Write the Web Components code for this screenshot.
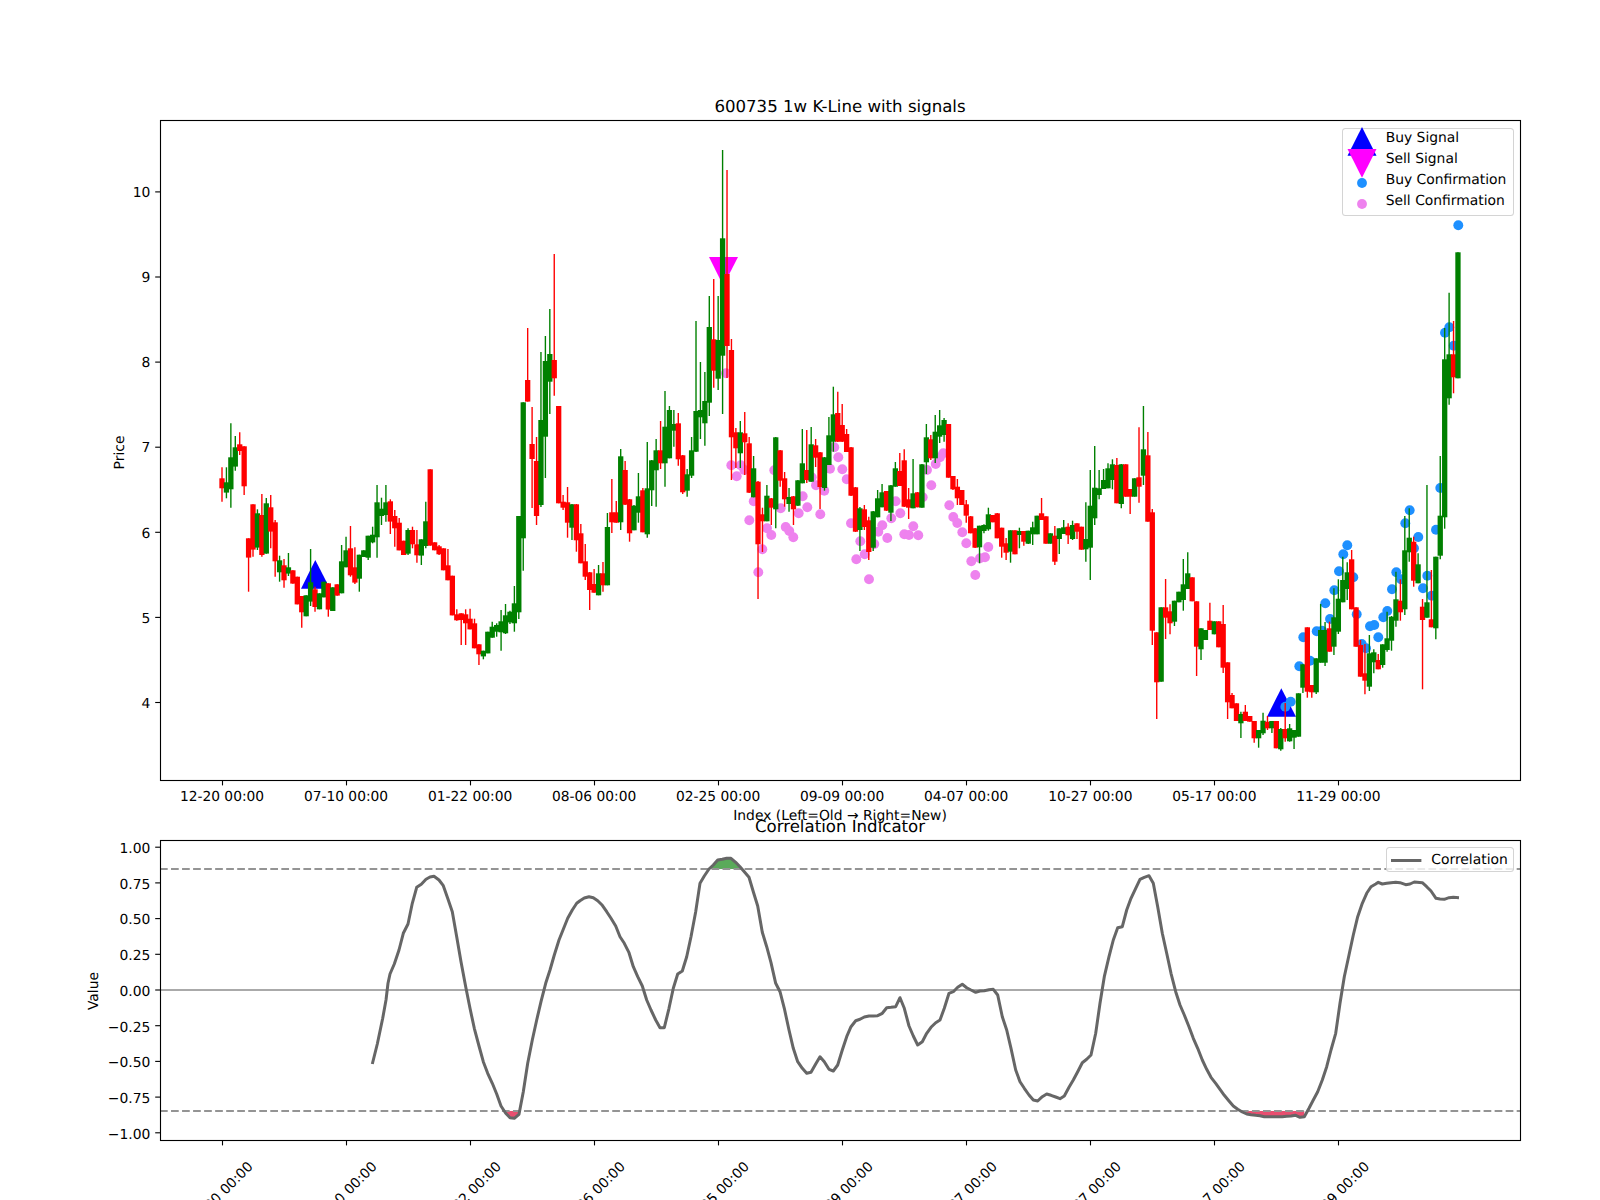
<!DOCTYPE html>
<html lang="en"><head><meta charset="utf-8"><title>600735 1w K-Line with signals</title>
<style>html,body{margin:0;padding:0;background:#fff;overflow:hidden}</style></head>
<body>
<chart-figure>
  <kline-panel>
    <chart-legend style="left:1182.3px;top:7.7px;width:172px;height:88.6px;--text-gap:8.6px;--shift:-0.4px;--marker-adj:0.4px">
      <legend-item marker="up">Buy Signal</legend-item>
      <legend-item marker="down">Sell Signal</legend-item>
      <legend-item marker="dot" color="#1e90ff">Buy Confirmation</legend-item>
      <legend-item marker="dot" color="#ee82ee">Sell Confirmation</legend-item>
    </chart-legend>
  </kline-panel>
  <corr-panel>
    <chart-legend style="left:1226.3px;top:7.3px;width:127.4px;height:25px;--shift:0.6px;--marker-adj:-0.6px">
      <legend-item marker="line">Correlation</legend-item>
    </chart-legend>
  </corr-panel>
</chart-figure>
<script>
const FONT = '"DejaVu Sans","Liberation Sans",sans-serif';
const xTickIdx = [0,28,56,84,112,140,168,196,224,252];
const xTickLabels = ['12-20 00:00','07-10 00:00','01-22 00:00','08-06 00:00','02-25 00:00','09-09 00:00','04-07 00:00','10-27 00:00','05-17 00:00','11-29 00:00'];
const idxX = n => 222 + 4.43 * n;
const z = (ox, oy) => ([x, y]) => [ox + x / 3, oy + y / 3];

/* candles: colour, wick top, body top, body bottom, wick bottom */
const Z1 = `r 262 295 325 365|g 262 307 338 355|g 130 232 328 383|g 168 202 260 272|r 157 193 213 225|r 199 199 319 345|r 475 475 533 635|r 373 373 509 530|g 388 400 503 510|r 342 405 525 530|g 354 370 521 521|r 345 382 455 505|r 420 427 544 590|g 527 541 577 605|r 537 556 601 623|g 519 562 581 588|r 571 571 611 611|r 590 590 673 673|r 648 648 697 743|g 646 646 709 709|g 507 607 665 678|r 620 628 681 695|g 640 640 688 688|g 605 605 652 652|r 610 610 689 710|g 622 622 693 693|r 613 613 647 647|g 495 544 640 640|g 470 511 562 562|r 438 505 586 590|r 502 562 608 612|g 524 524 596 635|g 511 511 531 531|g 467 467 533 540|g 440 464 487 490|g 315 367 472 533|g 353 386 408 435|g 315 367 405 425|r 358 364 425 462|r 390 408 445 500|r 414 428 511 511|r 482 482 525 525|g 445 450 521 525|r 440 450 493 505|r 450 493 526 548|g 478 478 527 555|g 365 424 498 505|r 268 268 497 497|r 487 487 511 511|r 495 499 523 525|r 505 505 571 571|r 507 556 601 601|r 587 587 706 706|r 688 703 721 722|r 700 700 720 795|r 688 703 730 795|r 686 716 748 748|r 716 730 805 805|r 793 793 823 855|g 812 812 829 838|g 755 755 820 820|g 725 740 773 773|g 730 735 755 770|g 690 724 757 812|g 672 706 760 762|g 692 695 727 732|g 618 670 730 755|g 408 408 697 717|g 67 67 475 572`;
const REAL = `r 328 380 401.6 401.6|r 407 444 459 508|r 437 461 516 525|g 352 420 505 507|g 336 361 436.7 478|g 309 354 381.7 414|r 254 360 378.3 395.7|r 406 406 503.3 503.3|r 495 501.7 507.7 510|r 487 502.3 522.7 537.7|g 504 504.3 527.7 540|r 504 504.3 540.3 551.7|r 524 533.3 563.3 563.3|r 544 561.3 576.7 580|r 572 572.3 590 610|r 569 584 592.7 592.7|g 565 573.3 595.3 595.3|r 562 573.3 585.3 591.7|g 513 527 585.3 585.3|r 479 512.3 522.3 533|r 501 512.3 522.7 522.7|g 449 456.3 522.3 530|r 461 470 504.7 505|r 499 499.3 533.3 541.7|g 505 505.7 530.3 530.3|g 473 496.3 512.7 522.7|r 488 490.3 532.3 532.3|g 442 488.3 534.3 537.7|g 460 460.3 490.3 506|g 439 450.3 470.3 506.7|r 421 450.3 463.3 469|g 391 426.7 463.3 486.7|g 406 410 458.3 458.3|g 410 424 430.7 446.7|r 413 423.3 459.3 465.7|r 455 455.3 492.3 494|g 469 474.3 490.7 496.7|g 437 450.3 475.7 478|g 321 411 451.7 452|g 362 410 417.3 439|g 372 401 423.3 445.7|g 296 327 402.7 416|r 279 339.3 370.7 387.7|g 296 340 378.7 390|g 150 238.3 355.7 414|r 170 274 346 378|r 339 350 437.3 480|r 428 432.3 448.3 468|g 421 432.3 453.3 468|r 412 433.3 442.3 475|r 437 443.3 492.7 493|g 456 468.3 497.3 497.3|r 481 481.7 544.3 599|r 507.7 514.3 521.3 552|g 485 495.7 521.3 521.3|r 498 498.3 507.7 525|g 437 437.3 509.3 528.3|r 450 450.3 480.7 486.7|r 472 478.3 499.3 506.7|g 488 497 504 511.7|r 496 496.3 509.3 525|g 480 480.3 505.7 506|g 429 463.3 483.3 483.3|r 430 470 480 483|g 427 444.3 481.7 481.7|r 439 445.3 457.7 467|r 452 452.3 487 509|g 457 457.3 488 490.7|g 417 435.3 465 465|g 386.7 414.3 441.7 451.7|r 391.7 413 441.7 442|r 404 425 441.7 442|r 429 434 452 452|r 447 447.3 495.7 496|r 487 487.3 531.7 532|g 507 508.3 530 551|r 505 509.3 527 530|r 516.7 520.3 552 560|g 511 511.3 547.7 551|g 490 498.3 517.3 517.3|g 484 492.3 507.3 507.3|r 491 491 510.7 511|g 485 485.3 512.7 521|g 462 468.3 486.7 486.7|r 453 471 486 486|r 449.3 460.3 506.7 507|r 488 499.3 507.7 519|g 459 493.3 508.3 508.3|r 492 492.3 507.3 507.3|g 464 464.3 507.7 507.7|g 424 437.3 462.3 474|r 435 439.3 458.3 460|g 415 431.7 458.3 463|g 410 425.3 436.7 443|g 418 420 435 441.7|r 424 424 477.7 477.7|r 476 476 489.3 490|r 479 486.7 498.3 505|r 490 490 505 505|r 500 504.3 515.7 522.7|r 516 516.3 533.3 533.3|r 528 528.3 547.7 548|g 525.7 525.7 547.3 563.3|g 524.3 525 531 533.3|g 507.7 514.3 529.3 530.7|r 515 515 522.3 522.3|r 513 513.3 538.3 538.3|r 527.7 527.7 546.7 557.7|r 538 543.3 552.7 560|g 530.3 530.3 551.7 562.7|r 530.3 530.3 554.3 554.3|g 527.7 531 535 548.3|r 531 531 541.7 545.7|g 530.7 530.7 543.7 544|g 521.7 527.3 534.3 545|g 515.7 515.7 534.3 534.3|r 498 513.3 520 520|r 516.3 516.3 543.7 543.7|g 533.3 533.3 543.7 543.7|r 526 535.7 561.7 565|g 528.3 528.3 539 554|g 520 527.3 534 534|r 523.3 526.7 535.3 544|g 520.7 525 539 540|r 523.3 523.3 531.7 539|r 526.7 526.7 549.7 549.7|g 502.3 539 549.3 561.7|g 470 505.7 547.7 580|g 446 487.7 518.3 525|g 470 488.3 495 499.3|g 469 480 489 489|g 463.3 468.3 488.3 488.3|g 459.3 464.3 480 489.3|r 458 465 503.3 503.3|g 464 464.3 504 508.3|r 464.3 464.3 496.7 496.7|r 489 489 496.7 514|g 478.3 478.3 496.7 496.7|r 427.3 477.3 486.7 502.7|g 406 449.3 475.7 485|r 432 455.3 521.7 521.7|r 509 512.3 630.7 645|r 632.3 632.3 682.3 719|g 607.3 607.3 681.7 681.7|r 579 607.3 617.7 639|r 604.3 611.3 623.3 634.3|g 600.7 600.7 621.7 626|g 591.7 591.7 602.3 602.3|g 559 584.3 600 610.7|g 552.3 573.3 589 589|r 577.3 577.3 601.3 601.3|r 601.3 601.3 646.7 676|g 628.3 628.3 649.3 660|g 630 630 640 640|r 602.7 620.7 630 630|g 621.3 621.3 634.3 634.3|r 621.3 621.3 647.3 647.3|r 605 624 667.7 673|r 662.3 662.3 702.3 719|r 693 695 708.3 708.3|r 703.3 703.3 721 721|g 711.7 714 723.3 738|r 705 711.7 721 721|r 716 716 721.7 721.7|r 721 721 738.3 742.7|g 730 730 738.3 747.7|g 712.7 720.7 733.3 735|r 716 721.7 728.3 730|g 721 721 728.3 733|r 721 721 748.3 748.3|g 728 729 749.3 750.7|r 703 729 738.3 741.7|g 724 728.3 741.3 741.7|g 730 730 737.7 749|g 693.3 693.3 736.7 736.7|g 664.3 664.3 687.7 693|r 627.3 627.3 691.7 697.7|r 685 685 692.3 697.7|g 658.3 658.3 692.3 694|g 604 630 662.7 662.7|g 622 630 662.7 666|r 621.7 628.3 651.7 651.7|g 588.3 617.3 646.7 655|g 579.3 598.7 631.7 634|g 556.7 580 602.3 602.3|g 562.3 572.3 589 600|r 550 559.3 609.3 609.3|r 607.3 607.3 646.7 646.7|r 640 645 676.7 676.7|r 644 673.3 680.7 694.3|g 635 653.3 686.7 691|g 649.3 652.3 662.3 673.3|r 654 660 669.3 669.3|g 644.3 644.3 665 667.7|g 611.7 638.3 650 651.7|g 616 616.7 640.7 650.7|g 571.7 599.3 620.7 626.7|r 579.3 600.7 612.3 620.7|g 516 550.3 609.3 615|g 508.3 537.7 552.3 561.7|r 536.7 541.7 580.7 586.7|g 553.3 564.3 583.3 583.3|r 599 606.7 620 689.3|g 485 602.3 617.7 617.7|r 570 619.3 627.3 627.3|g 556.7 556.7 628.3 639.3|g 456 515.7 555.7 559.3|g 328 359.3 517.3 528.7|g 292.7 354.3 398.3 404.7|r 321 354.3 377.3 393.3|g 252.3 252.3 378.3 378.3`;
const parseC = (s, f) => s.split('|').map(r => { const p = r.split(' '); return [p[0], ...p.slice(1).map(f)]; });
const CANDLES = [...parseC(Z1, v => 380 + v / 3), ...parseC(REAL, Number)];

const PINK = [
 ...[[574,196],[590,229],[602,196],[613,210],[628,361],[641,304],[655,517],[667,448],[681,385],[694,405],[703,211],[722,325],[737,381],[748,393],[760,412],[776,340],[788,289],[802,322],[815,232],[828,256],[841,343],[853,272],[870,206],[883,142],[895,172],[907,208],[920,238],[933,370],[949,478],[961,424],[974,463],[987,538],[1003,432],[1015,395],[1027,376],[1042,414],[1054,355],[1067,304],[1081,340],[1093,403],[1107,405],[1120,379],[1135,406],[1148,292],[1161,210],[1174,256],[1187,192]].map(z(540,400)),
 ...[[30,172],[40,160],[58,316],[70,351],[82,369],[97,397],[109,430],[124,484],[136,525],[150,475],[165,472],[175,441]].map(z(930,400)),
 [726,373.3]
];
const BLUE = [
 ...[[136,1010],[152,995],[178,889],[190,802],[210,872],[230,784],[246,782],[256,700],[270,747],[283,661],[297,604],[310,553],[322,526],[340,622],[350,733],[365,822],[378,835],[390,769],[403,765],[415,802],[430,742],[442,723],[456,658],[469,607],[483,628],[496,460],[509,421],[522,535],[535,501],[549,655],[562,617],[575,677],[588,479],[601,354]].map(z(1240,370)),
 [1445,332.7],[1449.3,327.3],[1453.7,345.7],[1458.3,225.3]
];
const LINE = [
 ...[[877,882],[892,822],[908,745],[918,690],[924,640],[930,612],[943,582],[957,540],[970,490],[984,462],[997,400],[1010,352],[1024,343],[1038,328],[1050,321],[1062,319],[1077,330],[1090,347],[1103,385],[1117,425],[1130,500],[1143,575],[1157,650],[1170,715],[1183,775],[1197,828],[1210,875],[1223,910],[1237,940],[1250,972],[1263,1008],[1277,1030],[1290,1043],[1303,1045],[1317,1033],[1330,965],[1343,880],[1357,810],[1370,750],[1383,695],[1397,640],[1410,600],[1423,555],[1437,510],[1450,478],[1463,445],[1477,420],[1490,400]].map(z(80,770)),
 ...[[0,392],[13,384],[27,380],[40,383],[53,392],[67,406],[80,425],[93,445],[107,468],[120,500],[133,520],[147,548],[160,590],[173,620],[187,648],[200,690],[213,720],[227,750],[240,773],[253,773],[267,715],[280,655],[293,612],[307,603],[320,560],[333,500],[347,425],[360,340],[373,318],[387,297],[400,285],[413,270],[427,268],[440,265],[453,265],[467,277],[480,290],[493,305],[507,322],[520,365],[533,408],[547,487],[560,530],[573,578],[587,640],[600,665],[613,715],[627,780],[640,835],[653,875],[667,895],[680,910],[693,907],[707,882],[720,860],[733,875],[747,898],[760,903],[773,885],[787,840],[800,800],[813,770],[827,752],[840,748],[853,741],[867,738],[880,738],[893,737],[907,730],[920,713],[933,712],[947,710],[960,683],[973,715],[987,768],[1000,798],[1013,825],[1027,815],[1040,790],[1053,772],[1067,758],[1080,750],[1093,715],[1107,670],[1120,665],[1133,652],[1147,643],[1160,653],[1173,660],[1187,667],[1200,663],[1213,662],[1227,659],[1240,658],[1253,675],[1267,740],[1280,780],[1293,835],[1307,900],[1320,935],[1333,955],[1347,975],[1360,990],[1373,993],[1387,980],[1400,972],[1413,976],[1427,981],[1440,986]].map(z(580,770)),
 ...[[13,978],[27,952],[40,930],[53,905],[67,878],[80,868],[93,855],[107,790],[120,700],[133,620],[147,560],[160,510],[173,473],[187,470],[200,420],[213,385],[227,355],[240,328],[253,322],[267,317],[280,340],[293,410],[307,490],[320,550],[333,610],[347,665],[360,705],[373,735],[387,770],[400,805],[413,835],[427,870],[440,898],[453,922],[467,940],[480,958],[493,976],[507,993],[520,1008],[533,1018],[547,1026],[560,1032],[573,1034],[587,1036],[600,1037],[613,1040],[627,1040],[640,1040],[653,1040],[667,1040],[680,1039],[693,1038],[707,1036],[720,1042],[733,1040],[747,1015],[760,990],[773,965],[787,930],[800,890],[813,840],[827,790],[840,700],[853,620],[867,555],[880,495],[893,440],[907,400],[920,370],[933,350],[947,342],[955,337],[967,342],[980,340],[993,338],[1007,337],[1020,338],[1037,344],[1050,342],[1063,336],[1087,338],[1100,350],[1113,363],[1128,385],[1140,387],[1153,388],[1167,383],[1180,382],[1197,383]].map(z(1060,770))
];
const FILL_UP = [[393,297],[400,285],[413,270],[427,268],[440,265],[453,265],[467,277],[480,290],[487,297]].map(z(580,770));
const FILL_DN1 = [[1272,1023],[1277,1030],[1290,1043],[1303,1045],[1317,1033],[1319,1023]].map(z(80,770));
const FILL_DN2 = [[555,1023],[560,1032],[573,1034],[587,1036],[600,1037],[613,1040],[653,1040],[680,1039],[693,1038],[707,1036],[720,1042],[733,1040],[733,1023]].map(z(1060,770));
const pts = a => a.map(p => p[0].toFixed(1) + ',' + p[1].toFixed(1)).join(' ');
const frame = (x, y, w, h) => `<rect x="${x+.5}" y="${y+.5}" width="${w}" height="${h}" fill="none" stroke="#000" stroke-width="1.11"/>`;
const xTicks = yAxis => xTickIdx.map(n => { const x = Math.round(idxX(n)) + .5; return `<line x1="${x}" x2="${x}" y1="${yAxis+.5}" y2="${yAxis+5.4}" stroke="#000" stroke-width="1.11"/>`; }).join('');
const yTick = (y, label, dy) => `<line x1="155.2" x2="160.5" y1="${y}" y2="${y}" stroke="#000" stroke-width="1.11"/><text x="150.3" y="${y + dy}" text-anchor="end">${label}</text>`;
const SVGCSS = `svg{position:absolute;inset:0;overflow:visible;font-family:${FONT};font-size:13.89px;fill:#000;text-rendering:geometricPrecision}`;

class ChartFigure extends HTMLElement {
  constructor() { super(); this.attachShadow({mode:'open'}).innerHTML = `<style>
    :host{display:flex;flex-direction:column;gap:60px;box-sizing:border-box;width:1600px;height:1200px;padding:120px 80px 0 160px;overflow:hidden;background:#fff;font-family:${FONT};color:#000}
  </style><slot></slot>`; }
}
class KlinePanel extends HTMLElement {
  constructor() { super();
    const candles = CANDLES.map((c, i) => { const x = idxX(i), col = c[0] === 'g' ? '#008000' : '#ff0000';
      return `<line x1="${x.toFixed(2)}" x2="${x.toFixed(2)}" y1="${c[1].toFixed(1)}" y2="${c[4].toFixed(1)}" stroke="${col}" stroke-width="1.39"/><rect x="${(x-2.65).toFixed(2)}" y="${c[2].toFixed(1)}" width="5.3" height="${Math.max(c[3]-c[2],1).toFixed(1)}" fill="${col}"/>`; }).join('');
    const dots = (a, col) => a.map(p => `<circle cx="${p[0].toFixed(1)}" cy="${p[1].toFixed(1)}" r="4.95" fill="${col}"/>`).join('');
    let yt = ''; for (let v = 4; v <= 10; v++) yt += yTick(617.4 - (v - 5) * 85.1, v, 5.2);
    this.attachShadow({mode:'open'}).innerHTML = `<style>
      :host{display:block;position:relative;width:1360px;height:660px;flex:none}
      ${SVGCSS}
    </style>
    <svg width="1360" height="660" viewBox="160 120 1360 660">
      <polygon points="315.3,560 301,588.7 330,588.7" fill="#0000ff"/>
      <polygon points="1281.3,688.3 1267,716.7 1296,716.7" fill="#0000ff"/>
      <polygon points="709,257 738,257 723.3,285.7" fill="#ff00ff"/>
      ${dots(PINK, '#ee82ee')}${dots(BLUE, '#1e90ff')}${candles}
      ${frame(160,120,1360,660)}${xTicks(780)}${yt}
      ${xTickIdx.map((n,i) => `<text x="${idxX(n).toFixed(1)}" y="801" text-anchor="middle" font-size="13.8">${xTickLabels[i]}</text>`).join('')}
      <text x="840" y="820" text-anchor="middle">Index (Left=Old → Right=New)</text>
      <text x="840" y="112" text-anchor="middle" font-size="16.6">600735 1w K-Line with signals</text>
      <text transform="translate(124 452.5) rotate(-90)" text-anchor="middle">Price</text>
    </svg><slot></slot>`; }
}
class CorrPanel extends HTMLElement {
  constructor() { super();
    const Y = v => 990 - 142.8 * v;
    let yt = ''; for (let i = 4; i >= -4; i--) { const v = i / 4; yt += yTick(Y(v), (v < 0 ? '\u2212' : '') + Math.abs(v).toFixed(2), 5.8); }
    this.attachShadow({mode:'open'}).innerHTML = `<style>
      :host{display:block;position:relative;width:1360px;height:300px;flex:none}
      ${SVGCSS}
    </style>
    <svg width="1360" height="300" viewBox="160 840 1360 300">
      <polygon points="${pts(FILL_UP)}" fill="#5aaa5a"/>
      <polygon points="${pts(FILL_DN1)}" fill="#e84f70"/>
      <polygon points="${pts(FILL_DN2)}" fill="#e84f70"/>
      <line x1="160" x2="1520" y1="990" y2="990" stroke="#aaaaaa" stroke-width="2.08"/>
      <line x1="160" x2="1520" y1="869" y2="869" stroke="#949494" stroke-width="2.2" stroke-dasharray="7.7 3.33"/>
      <line x1="160" x2="1520" y1="1111" y2="1111" stroke="#949494" stroke-width="2.2" stroke-dasharray="7.7 3.33"/>
      <polyline points="${pts(LINE)}" fill="none" stroke="#666" stroke-width="3" stroke-linejoin="round"/>
      ${frame(160,840,1360,300)}${xTicks(1140)}${yt}
      <text x="840" y="832" text-anchor="middle" font-size="16.6">Correlation Indicator</text>
      <text transform="translate(98 991) rotate(-90)" text-anchor="middle">Value</text>
      ${xTickIdx.map((n,i) => `<text transform="translate(${(idxX(n)+2).toFixed(1)} 1197) rotate(-45)" text-anchor="middle" font-size="13.8">${xTickLabels[i]}</text>`).join('')}
    </svg><slot></slot>`; }
}
class ChartLegend extends HTMLElement {
  constructor() { super(); this.attachShadow({mode:'open'}).innerHTML = `<style>
    :host{position:absolute;display:flex;flex-direction:column;box-sizing:border-box;background:rgba(255,255,255,.8);border:1.1px solid rgba(204,204,204,.85);border-radius:3.5px;font-family:${FONT};font-size:13.89px;text-rendering:geometricPrecision;z-index:2}
    ::slotted(:first-child){margin-top:var(--shift,0)}
  </style><slot></slot>`; }
}
class LegendItem extends HTMLElement {
  constructor() { super();
    const m = this.getAttribute('marker'), col = this.getAttribute('color');
    const shapes = {
      up: `<polygon points="15,1 29.5,29.7 .5,29.7" fill="#0000ff"/>`,
      down: `<polygon points=".5,1 29.5,1 15,29.7" fill="#ff00ff"/>`,
      dot: `<circle cx="15" cy="13" r="4.95" fill="${col}"/>`,
      line: `<line x1="0" x2="30.4" y1="11.5" y2="11.5" stroke="#666" stroke-width="3"/>`
    };
    const top = m === 'up' ? -2.8 : m === 'down' ? -1.8 : -0.5;
    this.attachShadow({mode:'open'}).innerHTML = `<style>
      :host{display:flex;align-items:center;flex:none;height:${m==='line'?'23':'21'}px;line-height:21px;white-space:nowrap}
      svg{flex:none;width:30.4px;height:21px;margin:0 var(--text-gap,9.6px) 0 ${m==='line'?'4':'3.4'}px;overflow:visible;position:relative;top:calc(${top}px + var(--marker-adj,0px))}
    </style><svg viewBox="0 0 30.4 21">${shapes[m]}</svg><slot></slot>`; }
}
customElements.define('chart-figure', ChartFigure);
customElements.define('kline-panel', KlinePanel);
customElements.define('corr-panel', CorrPanel);
customElements.define('chart-legend', ChartLegend);
customElements.define('legend-item', LegendItem);
</script>
</body></html>
